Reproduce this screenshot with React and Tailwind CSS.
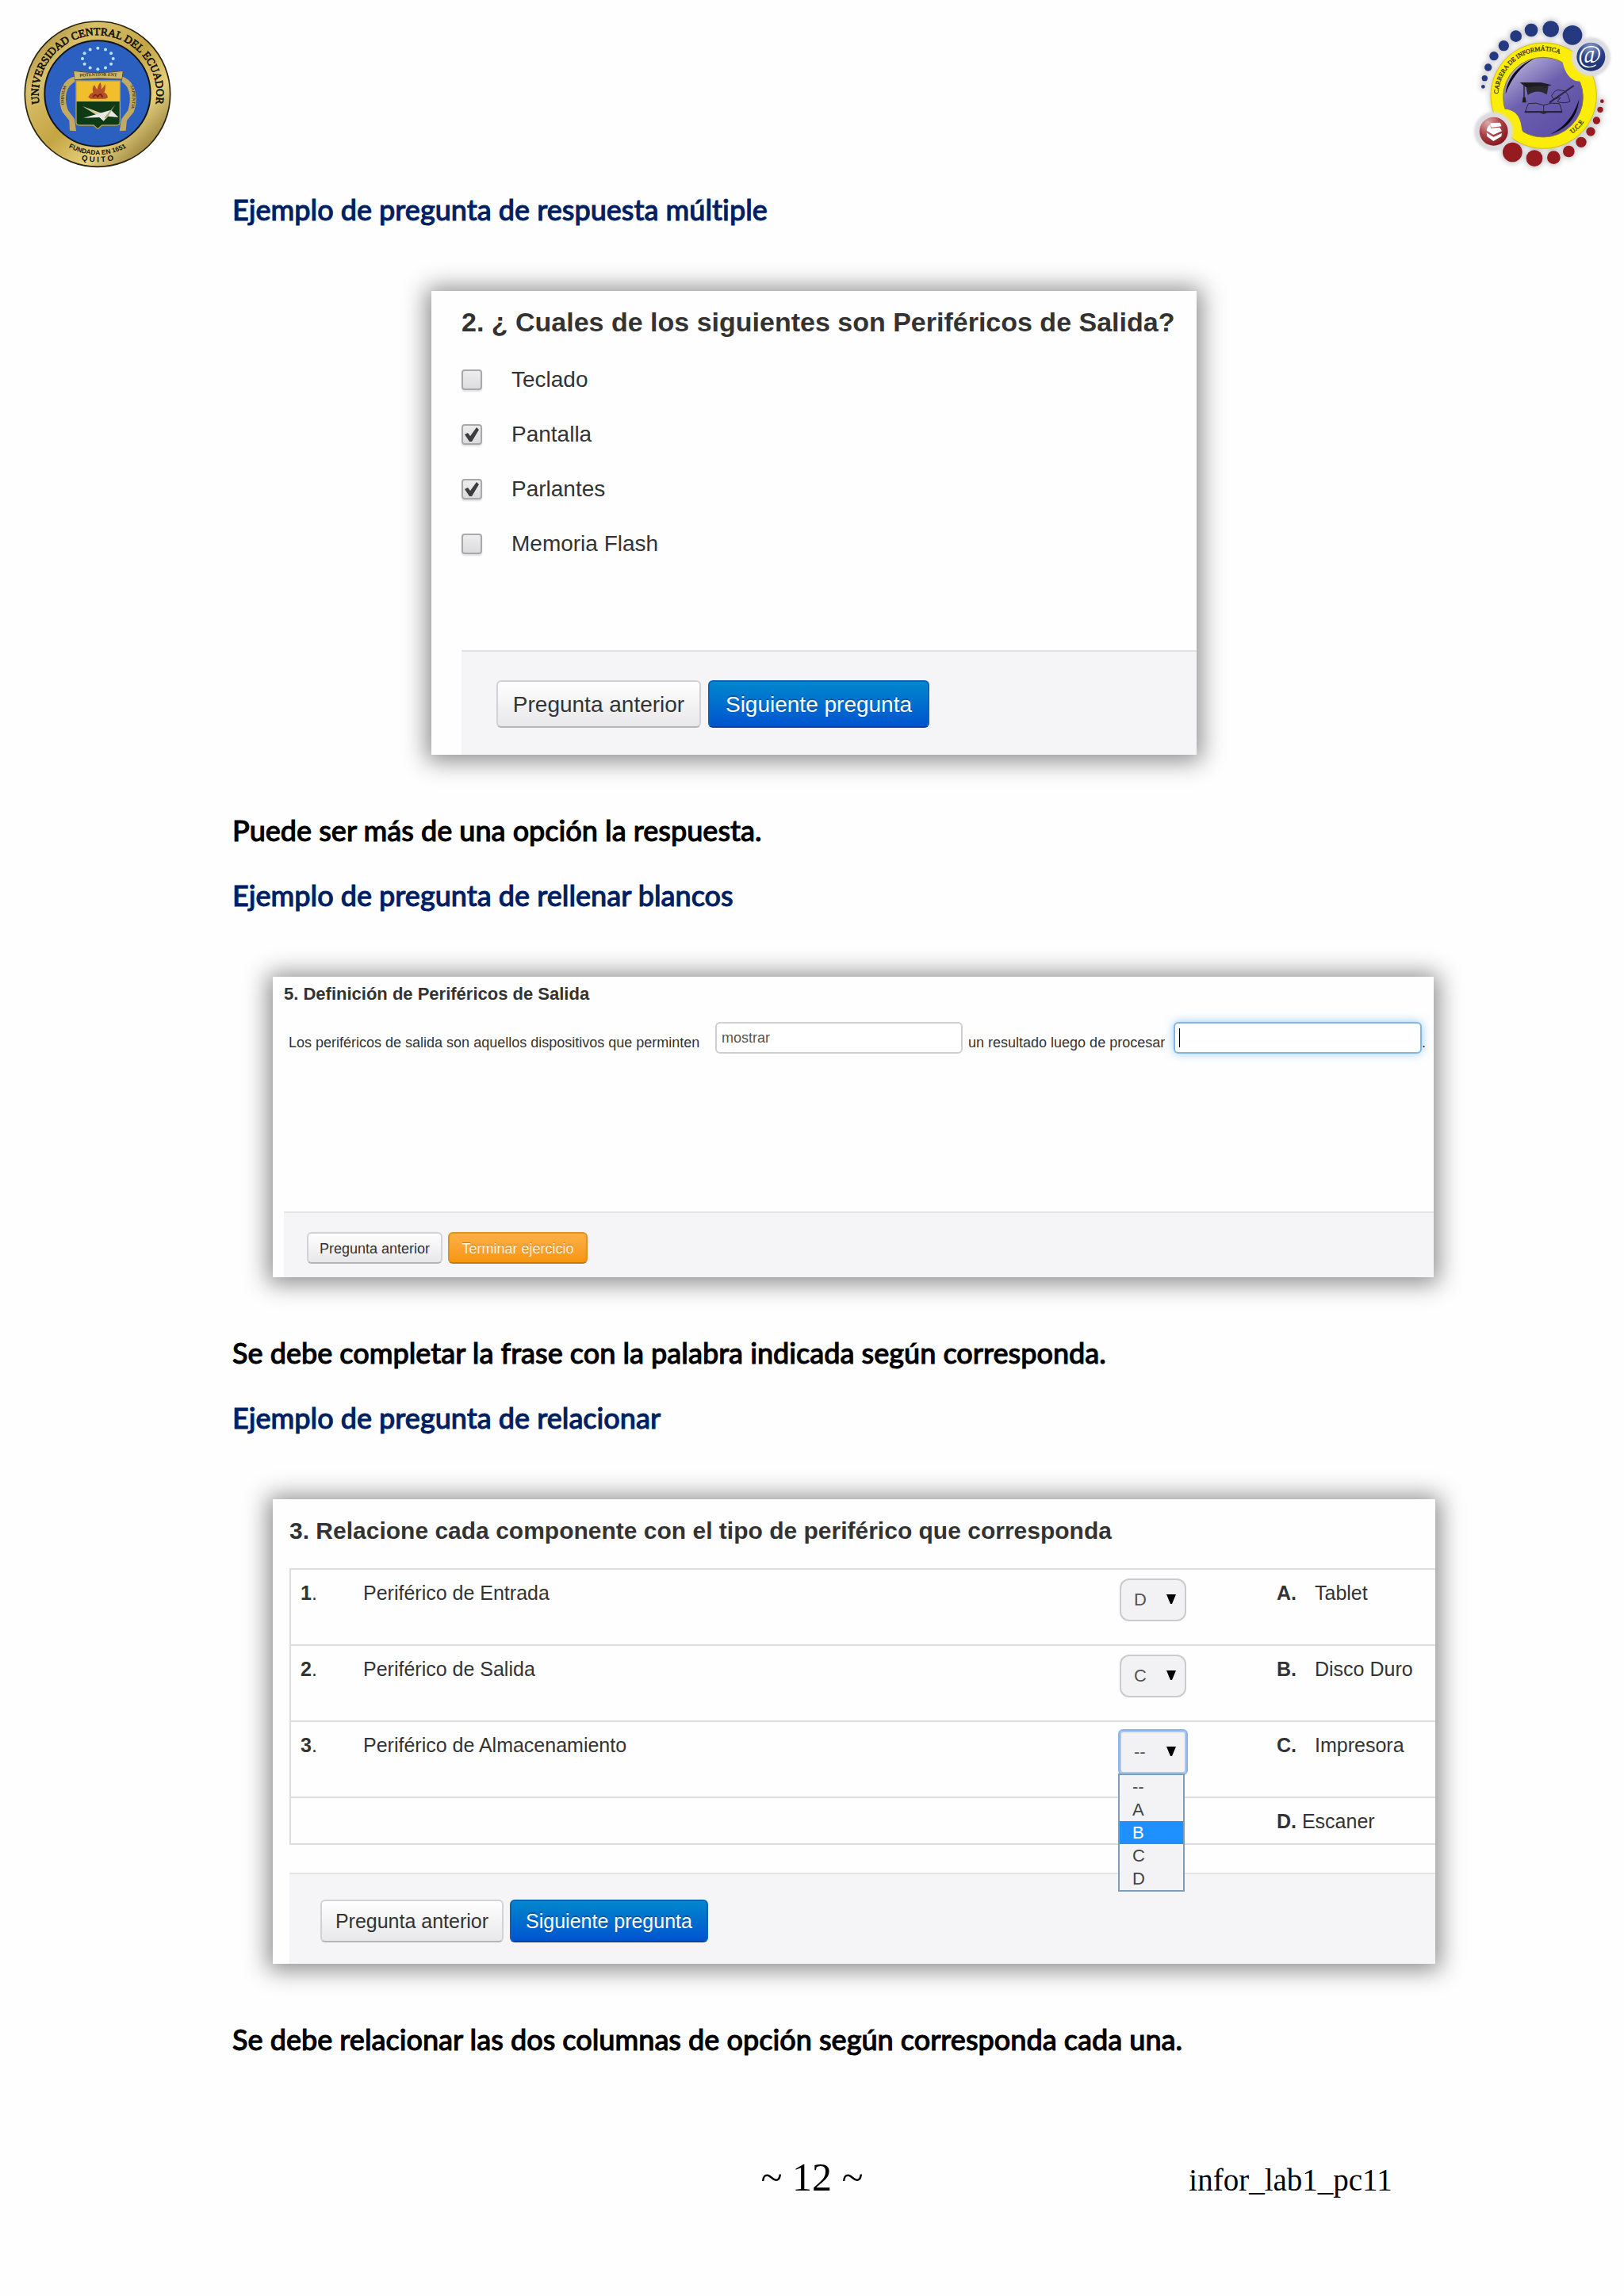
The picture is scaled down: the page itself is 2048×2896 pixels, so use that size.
import React, { useState } from "react";
import clsx from "clsx";

const UniversitySeal = () => {
  // ring of small stars above the shield
  const stars = Array.from({ length: 12 }, (_, i) => {
    const a = (i * Math.PI) / 6;
    return { x: 370 + 58 * Math.sin(a), y: 222 - 40 * Math.cos(a) };
  });

  return (
    <svg viewBox="0 0 720 720" className="size-[240px]" role="img" aria-label="Universidad Central del Ecuador">
      <defs>
        <linearGradient id="gold" x1="0" y1="0" x2="1" y2="1">
          <stop offset="0" stopColor="#8f7425" />
          <stop offset="0.25" stopColor="#d9c06a" />
          <stop offset="0.5" stopColor="#c4a544" />
          <stop offset="0.7" stopColor="#e6d07c" />
          <stop offset="1" stopColor="#5f4a12" />
        </linearGradient>
        <path id="sealTop" d="M 158 428 A 223 223 0 1 1 580 428" />
        <path id="sealBottom" d="M 170 471 A 230 230 0 0 0 568 471" />
        <path id="sealQuito" d="M 199 549 A 257 257 0 0 0 539 549" />
        <path id="ribbonTop" d="M 288 292 Q 370 284 456 290" />
        <path id="ribbonLeft" d="M 246 418 Q 232 350 262 308" />
        <path id="ribbonRight" d="M 486 312 Q 514 356 492 424" />
      </defs>
      <circle cx="369" cy="356" r="275" fill="url(#gold)" stroke="#2a2410" strokeWidth="5" />
      <circle cx="369" cy="354" r="200" fill="#2b5fc0" stroke="#14161c" strokeWidth="6" />
      <text fontFamily="Liberation Serif, serif" fontSize="41" fill="#15120a" stroke="#15120a" strokeWidth="2">
        <textPath href="#sealTop" startOffset="50%" textAnchor="middle">
          UNIVERSIDAD CENTRAL DEL ECUADOR
        </textPath>
      </text>
      <text fontFamily="Liberation Sans, sans-serif" fontSize="25" fontWeight="bold" fill="#15120a">
        <textPath href="#sealBottom" startOffset="50%" textAnchor="middle">
          FUNDADA EN 1651
        </textPath>
      </text>
      <text fontFamily="Liberation Sans, sans-serif" fontSize="29" fontWeight="bold" fill="#15120a">
        <textPath href="#sealQuito" startOffset="50%" textAnchor="middle">
          Q U I T O
        </textPath>
      </text>
      {stars.map((s, i) => (
        <circle key={i} cx={s.x} cy={s.y} r="6" fill="#b9e4fb" />
      ))}
      {/* ribbon */}
      <path
        d="M278 268 Q370 282 466 268 L462 300 Q370 292 282 302 Z"
        fill="#cdb871"
        stroke="#5d4d20"
        strokeWidth="3"
      />
      <path d="M280 290 C236 300 212 360 236 424 L262 456 L264 494 L288 496 L282 450 L258 418 C240 370 250 326 284 310 Z" fill="#c2aa62" />
      <path d="M464 290 C506 304 530 360 506 424 L480 456 L476 494 L452 496 L460 450 L484 418 C500 370 490 326 460 310 Z" fill="#c2aa62" />
      <g fontFamily="Liberation Serif, serif" fontWeight="bold" fill="#3d3213">
        <text fontSize="17">
          <textPath href="#ribbonTop" startOffset="50%" textAnchor="middle">POTENTIOR ENT</textPath>
        </text>
        <text fontSize="16">
          <textPath href="#ribbonLeft" startOffset="50%" textAnchor="middle">OMNIUM</textPath>
        </text>
        <text fontSize="16">
          <textPath href="#ribbonRight" startOffset="50%" textAnchor="middle">SAPIENTIA</textPath>
        </text>
      </g>
      {/* shield */}
      <path d="M288 306 H454 V384 H288 Z" fill="#f2bf2c" />
      <path d="M288 384 H454 V462 Q454 474 440 474 H386 L370 488 L354 474 H302 Q288 474 288 462 Z" fill="#0f3a16" />
      <path d="M288 306 H454 V462 Q454 474 440 474 H386 L370 488 L354 474 H302 Q288 474 288 462 Z" fill="none" stroke="#b4a053" strokeWidth="4" />
      <path d="M334 368 Q340 352 352 350 Q346 330 358 322 Q362 334 368 338 Q372 318 380 312 Q386 326 384 338 Q394 326 398 318 Q400 340 394 350 Q406 352 408 370 L398 374 H344 Z" fill="#b5502a" />
      <path d="M352 368 Q360 350 370 366 Q380 346 388 368" fill="none" stroke="#6e2410" strokeWidth="5" />
      <path d="M312 402 L372 424 L398 434 L366 436 Z" fill="#d8cf9c" />
      <path d="M316 446 L420 416 L448 444 L408 440 L392 458 L376 444 Z" fill="#e9e9e4" />
      <path d="M436 396 L394 446 L404 448 Z" fill="#b5a873" />
    </svg>
  );
};

const CareerLogo = () => {
  const blueDots = [
    [91, 328, 7],
    [97, 296, 11],
    [110, 255, 14],
    [132, 212, 17],
    [169, 173, 20],
    [215, 137, 22],
    [273, 114, 25],
    [347, 110, 31],
    [429, 133, 37],
  ];
  const redDots = [
    [541, 383, 7],
    [534, 415, 11],
    [520, 456, 14],
    [498, 498, 17],
    [462, 538, 20],
    [415, 573, 22],
    [358, 596, 25],
    [285, 599, 31],
    [202, 576, 37],
  ];

  return (
    <svg viewBox="0 0 624 720" className="h-[240px] w-[208px]" role="img" aria-label="Carrera de Informática UCE">
      <defs>
        <linearGradient id="violet" x1="0" y1="0" x2="0.7" y2="1">
          <stop offset="0" stopColor="#c9c6e4" />
          <stop offset="0.5" stopColor="#6c5fae" />
          <stop offset="1" stopColor="#5d4fa6" />
        </linearGradient>
        <radialGradient id="blueBall" cx="0.5" cy="0.15" r="0.9">
          <stop offset="0" stopColor="#8c9cc8" />
          <stop offset="0.5" stopColor="#27408a" />
          <stop offset="1" stopColor="#182c68" />
        </radialGradient>
        <radialGradient id="redBall" cx="0.3" cy="0.2" r="0.9">
          <stop offset="0" stopColor="#dba9a9" />
          <stop offset="0.5" stopColor="#ad4046" />
          <stop offset="1" stopColor="#7d1218" />
        </radialGradient>
        <filter id="halo" x="-20%" y="-20%" width="140%" height="140%">
          <feGaussianBlur stdDeviation="9" />
        </filter>
        <filter id="ballHalo" x="-20%" y="-20%" width="140%" height="140%">
          <feGaussianBlur stdDeviation="4" />
        </filter>
        <path id="logoTop" d="M 148 372 A 172 172 0 0 1 396 210" />
        <path id="logoBottom" d="M 428 506 A 180 180 0 0 0 500 400" />
      </defs>
      <g fill="#c9c9cd" filter="url(#halo)">
        <circle cx="320" cy="362" r="205" />
        <circle cx="499" cy="215" r="62" />
        <circle cx="131" cy="497" r="62" />
        {[...blueDots, ...redDots].map(([x, y, r]) => (
          <circle key={`${x}-${y}`} cx={x} cy={y} r={r + 6} />
        ))}
      </g>
      <circle cx="320" cy="362" r="200" fill="#fbec0a" stroke="#d6bd18" strokeWidth="3" />
      <circle cx="318" cy="368" r="151" fill="url(#violet)" stroke="#8e7d1c" strokeWidth="3" />
      <path d="M284 222 C222 246 180 300 176 356 C196 300 232 252 284 222 Z" fill="#0c0b14" />
      <path d="M454 376 C448 440 412 488 346 508 C406 478 436 430 454 376 Z" fill="#0c0b14" />
      {/* notches where the two balls meet the ring */}
      <path d="M388 214 Q398 290 440 306 L470 310 L500 292 L462 210 Z" fill="#fbec0a" />
      <path d="M140 440 L150 415 Q226 402 236 480 Q238 508 262 520 L210 524 Z" fill="#fbec0a" />
      <g fill="#dcdce0" filter="url(#ballHalo)">
        <circle cx="499" cy="215" r="73" />
        <circle cx="131" cy="497" r="73" />
      </g>
      {blueDots.map(([x, y, r]) => (
        <circle key={x} cx={x} cy={y} r={r} fill="#24397f" />
      ))}
      {redDots.map(([x, y, r]) => (
        <circle key={x} cx={x} cy={y} r={r} fill="#961b21" />
      ))}
      <circle cx="499" cy="215" r="54" fill="url(#blueBall)" />
      <circle cx="131" cy="497" r="54" fill="url(#redBall)" />
      <text x="494" y="236" fontFamily="Liberation Serif, serif" fontSize="96" fill="#fff" textAnchor="middle">
        @
      </text>
      <path d="M118 466 L156 464 L160 478 L122 482 Z M108 480 L118 470 L120 486 L154 482 L162 496 L130 510 L104 494 Z" fill="#fff" />
      <path d="M104 502 L130 518 L162 504 L160 516 L130 534 L106 516 Z" fill="#fff" />
      {/* mortarboard */}
      <path d="M230 312 L310 312 L350 322 L296 338 L256 332 Z" fill="#1e1c22" />
      <path d="M254 334 Q296 320 338 328 L332 358 Q296 334 260 360 Z" fill="#2b2930" />
      <path d="M246 322 V372" stroke="#1e1c22" strokeWidth="4" />
      <path d="M242 368 H251 L254 388 H239 Z" fill="#1e1c22" />
      {/* hand, pen and book */}
      <g fill="none" stroke="#2a2540" strokeWidth="3">
        <path d="M434 324 L342 388" strokeWidth="6" />
        <path d="M350 362 Q364 334 384 342 Q402 340 412 360 L420 384 Q396 394 372 384 L384 370 L356 374 Z" />
        <path d="M262 392 L250 424 H390 L380 392 Q348 386 320 398 Q292 386 262 392 Z M320 398 V422" />
      </g>
      <path d="M248 420 H390 V427 H334 L320 432 L306 427 H248 Z" fill="#2a2540" />
      <g fontFamily="Liberation Serif, serif" fill="#3c3708" stroke="#3c3708" strokeWidth="1">
        <text fontSize="24">
          <textPath href="#logoTop" startOffset="50%" textAnchor="middle">
            CARRERA DE INFORMÁTICA
          </textPath>
        </text>
        <text fontSize="25">
          <textPath href="#logoBottom">U.C.E</textPath>
        </text>
      </g>
    </svg>
  );
};

const ExampleTitle = ({ children }) => (
  <h2 className="font-['Lato',sans-serif] text-[36px] leading-[48px] font-medium text-[#001f63] [-webkit-text-stroke:1px] [font-variant-ligatures:none]">
    {children}
  </h2>
);

const Note = ({ children }) => (
  <p className="mt-[71px] mb-[34px] font-['Lato',sans-serif] text-[36px] leading-[48px] font-medium text-black [-webkit-text-stroke:1px] [font-variant-ligatures:none]">
    {children}
  </p>
);

const Card = ({ className, children }) => (
  <section
    className={clsx(
      "mt-[79px] bg-[#fefefe] font-['Liberation_Sans',sans-serif] text-[#333] shadow-[0_2px_28px_6px_rgba(0,0,0,0.45)]",
      className
    )}
  >
    {children}
  </section>
);

const Button = ({ variant = "light", className, children }) => (
  <button
    type="button"
    className={clsx(
      "cursor-pointer rounded-md border-2 pt-0.5 whitespace-nowrap",
      variant === "light" &&
        "border-[#d2d1d3] border-b-[#b5b4b6] bg-linear-to-b from-white to-[#e8e7e9] text-[#333]",
      variant === "blue" &&
        "border-[#0a63b8] border-b-[#0346a8] bg-linear-to-b from-[#0586cc] to-[#0353d0] text-white [text-shadow:0_-2px_0_rgba(0,0,0,0.25)]",
      variant === "orange" &&
        "border-[#dd9228] border-b-[#c47a10] bg-linear-to-b from-[#fbb044] to-[#f89508] text-[#fff3dc] [text-shadow:0_-1px_0_rgba(0,0,0,0.25)]",
      className
    )}
  >
    {children}
  </button>
);

const MultipleChoice = () => {
  const [options, setOptions] = useState([
    { id: "teclado", label: "Teclado", checked: false },
    { id: "pantalla", label: "Pantalla", checked: true },
    { id: "parlantes", label: "Parlantes", checked: true },
    { id: "memoria", label: "Memoria Flash", checked: false },
  ]);

  const toggle = (id) =>
    setOptions(options.map((o) => (o.id === id ? { ...o, checked: !o.checked } : o)));

  return (
    <Card className="ml-[251px] max-w-[965px] pt-[19px] pl-[38px]">
      <h3 className="text-[34px] leading-10 font-bold">
        2. ¿ Cuales de los siguientes son Periféricos de Salida?
      </h3>
      <ul className="mt-[18px]">
        {options.map(({ id, label, checked }) => (
          <li key={id} className="flex h-[69px] items-center">
            <span className="relative flex">
              <input
                id={id}
                type="checkbox"
                checked={checked}
                onChange={() => toggle(id)}
                className="size-[26px] appearance-none rounded-sm border-2 border-[#a9a8aa] bg-linear-to-b from-[#ededee] to-[#dcdbdd] shadow-[0_2px_2px_rgba(0,0,0,0.12)]"
              />
              {checked && (
                <svg viewBox="0 0 26 26" className="pointer-events-none absolute inset-0 size-[26px]">
                  <path d="M4 13 L8 11 L11 15 L19 4 L22 7 L13 22 H10 Z" fill="#3d3c3f" />
                </svg>
              )}
            </span>
            <label htmlFor={id} className="pl-[37px] text-[28px]">
              {label}
            </label>
          </li>
        ))}
      </ul>
      <div className="mt-[100px] flex gap-[9px] border-t-2 border-[#e2e1e3] bg-[#f5f4f6] pt-9 pb-[34px] pl-11 text-[28px]">
        <Button className="h-[60px] w-[258px]">Pregunta anterior</Button>
        <Button variant="blue" className="h-[60px] w-[279px]">
          Siguiente pregunta
        </Button>
      </div>
    </Card>
  );
};

const FillBlanks = () => {
  const [first, setFirst] = useState("mostrar");
  const [second, setSecond] = useState("");

  return (
    <Card className="mr-0.5 ml-[51px] pt-1.5 pl-3.5">
      <h3 className="text-[22px] leading-8 font-bold">5. Definición de Periféricos de Salida</h3>
      <div className="mt-[19px] flex items-end gap-[7px] pl-1.5 text-lg leading-7">
        <label htmlFor="blank-1" className="w-[531px]">
          Los periféricos de salida son aquellos dispositivos que perminten
        </label>
        <input
          id="blank-1"
          type="text"
          value={first}
          onChange={(e) => setFirst(e.target.value)}
          className="h-10 w-[312px] rounded-md border-2 border-[#cfced0] bg-white px-1.5 text-[#555]"
        />
        <label htmlFor="blank-2" className="w-[252px]">
          un resultado luego de procesar
        </label>
        <span className="relative flex items-end">
          <input
            id="blank-2"
            type="text"
            value={second}
            onChange={(e) => setSecond(e.target.value)}
            className="h-10 w-[313px] rounded-md border-2 border-[#7fb6e2] bg-white px-1.5 shadow-[0_0_12px_rgba(82,168,236,0.6)] outline-none"
          />
          <span className="absolute top-2 left-[7px] h-6 w-px bg-black" />
          <span>.</span>
        </span>
      </div>
      <div className="mt-[199px] flex gap-[7px] border-t-2 border-[#e6e5e7] bg-[#f5f4f6] pt-6 pb-[17px] pl-[29px] text-lg">
        <Button className="h-10 w-[171px]">Pregunta anterior</Button>
        <Button variant="orange" className="h-10 w-[176px]">
          Terminar ejercicio
        </Button>
      </div>
    </Card>
  );
};

const choices = ["--", "A", "B", "C", "D"];

const LetterSelect = ({ label, initial, open }) => {
  const [value, setValue] = useState(initial);

  return (
    <div className="relative w-[84px]">
      <select
        aria-label={label}
        value={value}
        onChange={(e) => setValue(e.target.value)}
        className={clsx(
          "block h-[54px] w-[84px] appearance-none border-2 bg-[#f2f1f3] pl-4 text-[22px] text-[#555]",
          open ? "rounded-sm border-[#a9c6ee] outline-2 outline-[#8db4ea]" : "rounded-xl border-[#cbcacc]"
        )}
      >
        {choices.map((c) => (
          <option key={c}>{c}</option>
        ))}
      </select>
      <svg viewBox="0 0 12 12" className="pointer-events-none absolute top-5 right-[13px] size-3">
        <path d="M0 0 H12 L7 12 H5 Z" fill="#000" />
      </svg>
      {open && (
        <ul className="absolute top-[54px] -left-0.5 w-[84px] border-2 border-[#7f9db9] bg-[#f3f3f5] text-[22px] leading-[29px] text-[#444]">
          {choices.map((c) => (
            <li key={c} className={clsx("pl-4", c === "B" && "bg-[#1e90ff] text-white")}>
              {c}
            </li>
          ))}
        </ul>
      )}
    </div>
  );
};

const Matching = () => {
  const rows = [
    { n: "1", text: "Periférico de Entrada", value: "D", letter: "A", option: "Tablet" },
    { n: "2", text: "Periférico de Salida", value: "C", letter: "B", option: "Disco Duro" },
    { n: "3", text: "Periférico de Almacenamiento", value: "--", letter: "C", option: "Impresora", open: true },
  ];

  return (
    <Card className="ml-[51px] pt-5 pl-[21px]">
      <h3 className="text-[30px] leading-10 font-bold">
        3. Relacione cada componente con el tipo de periférico que corresponda
      </h3>
      <table className="mt-[27px] w-full table-fixed border-collapse border-y-2 border-l-2 border-[#dddcde] text-[25px] leading-8">
        <colgroup>
          <col className="w-[92px]" />
          <col />
          <col className="w-[198px]" />
          <col className="w-[200px]" />
        </colgroup>
        <tbody>
          {rows.map(({ n, text, value, letter, option, open }) => (
            <tr key={n} className="h-24 border-b-2 border-[#dddcde] align-top">
              <td className="pt-[13px] pl-3">
                <b>{n}</b>.
              </td>
              <td className="pt-[13px]">{text}</td>
              <td className="pt-[11px]">
                <LetterSelect label={text} initial={value} open={open} />
              </td>
              <td className="pt-[13px]">
                <span className="flex">
                  <b className="w-12">{letter}.</b>
                  {option}
                </span>
              </td>
            </tr>
          ))}
          <tr className="h-[59px] align-top">
            <td colSpan={3} />
            <td className="pt-[13px]">
              <b>D.</b> Escaner
            </td>
          </tr>
        </tbody>
      </table>
      <div className="mt-[35px] flex gap-2 border-t-2 border-[#e4e3e5] bg-[#f5f4f6] pt-8 pb-[27px] pl-[39px] text-[25px]">
        <Button className="h-[54px] w-[231px]">Pregunta anterior</Button>
        <Button variant="blue" className="h-[54px] w-[250px]">
          Siguiente pregunta
        </Button>
      </div>
    </Card>
  );
};

const App = () => {
  return (
    <div className="min-h-screen bg-[#fefefe]">
      <header className="flex justify-between">
        <UniversitySeal />
        <CareerLogo />
      </header>

      <main className="pr-[238px] pl-[293px]">
        <ExampleTitle>Ejemplo de pregunta de respuesta múltiple</ExampleTitle>
        <MultipleChoice />
        <Note>Puede ser más de una opción la respuesta.</Note>

        <ExampleTitle>Ejemplo de pregunta de rellenar blancos</ExampleTitle>
        <FillBlanks />
        <Note>Se debe completar la frase con la palabra indicada según corresponda.</Note>

        <ExampleTitle>Ejemplo de pregunta de relacionar</ExampleTitle>
        <Matching />
        <Note>Se debe relacionar las dos columnas de opción según corresponda cada una.</Note>
      </main>

      <footer className="mt-[122px] grid grid-cols-3 items-baseline pb-[80px] font-['Liberation_Serif',serif] text-black">
        <span />
        <span className="text-center text-[50px] leading-[56px]">~ 12 ~</span>
        <span className="pl-[134px] text-[39px]">infor_lab1_pc11</span>
      </footer>
    </div>
  );
};

export default App;
